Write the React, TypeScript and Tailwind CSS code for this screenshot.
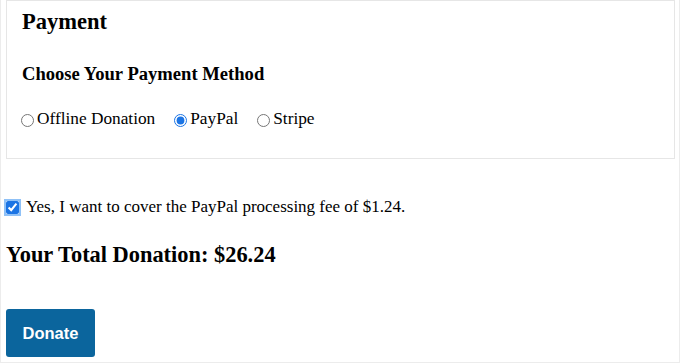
import React from 'react';

const serif = { fontFamily: '"Liberation Serif", "Times New Roman", serif' };

function Method({ label, checked }: { label: string; checked?: boolean }) {
  return (
    <label className="flex items-center">
      <input
        type="radio"
        name="method"
        checked={!!checked}
        readOnly
        className="m-0 w-[13px] h-[13px] mt-[4px] accent-[#1b74e4]"
      />
      <span className="ml-[3px] text-[17.3px] text-black">{label}</span>
    </label>
  );
}

export default function App() {
  return (
    <div className="w-[680px] h-[364px] bg-white overflow-hidden" style={serif}>
      <div className="h-[363px] border-x border-b border-[#ececec] pl-[5px] pr-[4px]">
        {/* Payment fieldset */}
        <div className="h-[159px] border border-[#e6e6e6] pl-[15px] pt-[7px]">
          <h2 className="text-[22.5px] font-bold leading-[28px] text-black">Payment</h2>
          <h3 className="mt-[27px] text-[18.6px] font-bold leading-[22px] text-black">Choose Your Payment Method</h3>
          <div className="mt-[21px] flex items-center gap-[19px] -ml-[1px]">
            <Method label="Offline Donation" />
            <Method label="PayPal" checked />
            <Method label="Stripe" />
          </div>
        </div>

        {/* Fee */}
        <label className="mt-[36px] flex items-center">
          <input
            type="checkbox"
            checked
            readOnly
            className="m-0 w-[13px] h-[13px] accent-[#1b74e4] rounded-[3px] ring-2 ring-[#8fc1f7]"
          />
          <span className="ml-[7px] text-[17px] leading-[24px] text-black">
            Yes, I want to cover the PayPal processing fee of $1.24.
          </span>
        </label>

        <div className="mt-[22px] text-[22.4px] font-bold leading-[28px] text-black">
          Your Total Donation: $26.24
        </div>

        <button
          className="mt-[40px] w-[89px] h-[48px] rounded-[3px] bg-[#0b659d] text-white text-[16.5px] font-bold"
          style={{ fontFamily: '"Liberation Sans", Arial, sans-serif' }}
        >
          Donate
        </button>
      </div>
    </div>
  );
}
